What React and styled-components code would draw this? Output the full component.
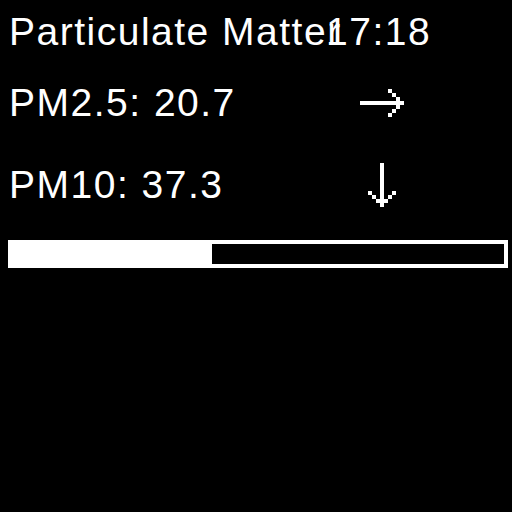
import React from 'react'
import styled, { createGlobalStyle } from 'styled-components'

const GlobalStyle = createGlobalStyle`
  html, body {
    margin: 0;
    background: #000;
  }
`

const Screen = styled.div`
  width: 512px;
  height: 512px;
  background: #000;
  color: #fff;
  font-family: "Liberation Sans", Arial, sans-serif;
  font-size: 39px;
  line-height: 40px;
  letter-spacing: 1.5px;
  padding-top: 12px;
  box-sizing: border-box;
  display: flex;
  flex-direction: column;
`

const TitleRow = styled.div`
  position: relative;
  height: 40px;
  padding-left: 9px;
  white-space: nowrap;
`

const Clock = styled.span`
  position: absolute;
  top: 0;
  left: 326px;
`

const Reading = styled.div`
  display: grid;
  grid-template-columns: 351px 44px;
  align-items: center;
  height: 40px;
  padding-left: 9px;
  margin-top: ${p => p.$gap}px;
  white-space: nowrap;
`

const Trend = styled.div`
  display: flex;
  justify-content: center;
  align-items: center;
  svg { display: block; shape-rendering: crispEdges; }
`

const Bar = styled.div`
  margin: ${p => p.$gap}px 0 0 8px;
  width: 500px;
  height: 28px;
  border: 4px solid #fff;
  box-sizing: border-box;
  display: flex;
`

const Fill = styled.div`
  background: #fff;
  height: 100%;
`

const px = (cells, key) =>
  cells.map(([x, y, w = 1, h = 1], i) => (
    <rect key={`${key}${i}`} x={x * 4} y={y * 4} width={w * 4} height={h * 4} fill="#fff" />
  ))

const ArrowRight = () => (
  <svg width="44" height="28" viewBox="0 0 44 28">
    {px([[7, 0], [8, 1], [9, 2], [0, 3, 11], [9, 4], [8, 5], [7, 6]], 'r')}
  </svg>
)

const ArrowDown = () => (
  <svg width="28" height="44" viewBox="0 0 28 44">
    {px([[3, 0, 1, 11], [0, 7], [6, 7], [1, 8], [5, 8], [2, 9, 3]], 'd')}
  </svg>
)

const readings = [
  { label: 'PM2.5', value: '20.7', trend: 'flat', gap: 31 },
  { label: 'PM10', value: '37.3', trend: 'down', gap: 40 },
]

const App = () => {
  const level = 200 / 492
  return (
    <>
      <GlobalStyle />
      <Screen>
        <TitleRow>
          Particulate Matter
          <Clock>17:18</Clock>
        </TitleRow>
        {readings.map(r => (
          <Reading key={r.label} $gap={r.gap}>
            <span>{r.label}: {r.value}</span>
            <Trend>{r.trend === 'down' ? <ArrowDown /> : <ArrowRight />}</Trend>
          </Reading>
        ))}
        <Bar $gap={37}>
          <Fill style={{ width: `${level * 100}%` }} />
        </Bar>
      </Screen>
    </>
  )
}

export default App
